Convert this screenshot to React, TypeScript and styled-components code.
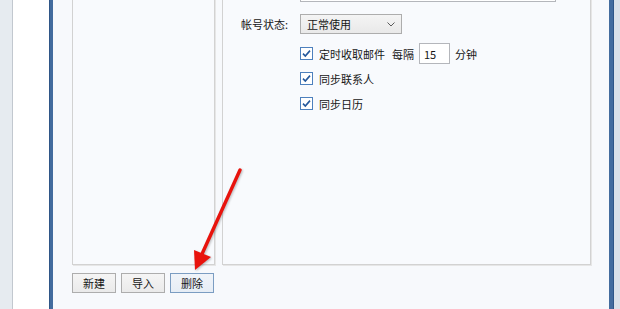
import React from "react";
import styled, { createGlobalStyle } from "styled-components";

const GlobalStyle = createGlobalStyle`
  html, body {
    margin: 0;
    padding: 0;
  }
  body {
    background: #e6ebf0;
    font-family: "Noto Sans CJK SC", "Noto Sans", sans-serif;
    font-size: 11px;
    color: #161616;
    overflow: hidden;
  }
`;

const Page = styled.div`
  position: relative;
  display: flex;
  width: 620px;
  height: 309px;
  overflow: hidden;
`;

const DesktopStrip = styled.div`
  width: 12px;
  background: #e6ebf0;
  border-right: 1px solid #c2c8cf;
`;

const SideWhite = styled.div`
  width: 36px;
  background: #ffffff;
`;

const WindowEdge = styled.div<{ $side: "left" | "right" }>`
  width: ${(p) => (p.$side === "left" ? "4px" : "5px")};
  background: #436c9e;
  box-shadow: ${(p) =>
    p.$side === "left"
      ? "inset 1px 0 0 #2f5687"
      : "inset -1px 0 0 #2f5687"};
`;

const RightStrip = styled.div`
  flex: 1;
  background: #dae1e9;
`;

const WindowBody = styled.div`
  width: 556px;
  box-sizing: border-box;
  padding: 0 18px 0 19px;
  background: #f7f9fc;
  display: flex;
  flex-direction: column;
`;

const Panels = styled.div`
  display: flex;
  gap: 7px;
  margin-top: -30px;
  height: 295px;
`;

const Panel = styled.div`
  box-sizing: border-box;
  border: 1px solid #d2d2d2;
  box-shadow: 1px 1px 0 #e6e6e6;
  background: #f8fafd;
`;

const ListPanel = styled(Panel)`
  width: 143px;
`;

const SettingsPanel = styled(Panel)`
  flex: 1;
  display: flex;
  flex-direction: column;
  padding: 11px 0 0 10px;
`;

const FieldRow = styled.div<{ $gap: number; $height: number }>`
  display: flex;
  align-items: center;
  gap: 12px;
  height: ${(p) => p.$height}px;
  margin-top: ${(p) => p.$gap}px;
`;

const Label = styled.span`
  width: 55px;
  text-align: right;
  white-space: nowrap;
`;

const TextInput = styled.div<{ $width: number; $height: number }>`
  box-sizing: border-box;
  width: ${(p) => p.$width}px;
  height: ${(p) => p.$height}px;
  border: 1px solid #b4b6bb;
  background: #ffffff;
  display: flex;
  align-items: center;
  padding-left: 4px;
`;

const Select = styled.div`
  box-sizing: border-box;
  width: 102px;
  height: 20px;
  border: 1px solid #adadad;
  background: linear-gradient(#f4f4f4, #e9e9e9);
  display: flex;
  align-items: center;
  justify-content: space-between;
  padding: 0 6px 0 6px;
`;

const CheckLine = styled.div`
  display: flex;
  align-items: center;
`;

const Box = styled.span`
  box-sizing: border-box;
  width: 13px;
  height: 13px;
  border: 1px solid #4d80bd;
  background: #ffffff;
  display: flex;
  align-items: center;
  justify-content: center;
  margin-right: 6px;
`;

const Inline = styled.span<{ $left?: number }>`
  margin-left: ${(p) => p.$left ?? 0}px;
  white-space: nowrap;
`;

const ButtonRow = styled.div`
  display: flex;
  gap: 5px;
  margin-top: 8px;
`;

const Button = styled.div<{ $focused?: boolean }>`
  box-sizing: border-box;
  width: 44px;
  height: 20px;
  border: 1px solid ${(p) => (p.$focused ? "#7b9dc2" : "#adadad")};
  background: ${(p) =>
    p.$focused
      ? "linear-gradient(#f0f4f9, #e6edf5)"
      : "linear-gradient(#f5f5f5, #eaeaea)"};
  display: flex;
  align-items: center;
  justify-content: center;
`;

const ArrowLayer = styled.svg`
  position: absolute;
  left: 0;
  top: 0;
  width: 620px;
  height: 309px;
  pointer-events: none;
  filter: drop-shadow(1px 1px 1px rgba(0, 0, 0, 0.25));
`;

const Checkbox: React.FC<{ children: React.ReactNode }> = ({ children }) => (
  <CheckLine>
    <Box>
      <svg width="11" height="11" viewBox="0 0 11 11">
        <path
          d="M2 5.6 L4.3 8 L9 2.6"
          fill="none"
          stroke="#24589c"
          strokeWidth="1.6"
        />
      </svg>
    </Box>
    {children}
  </CheckLine>
);

const Chevron = () => (
  <svg width="8" height="5" viewBox="0 0 8 5">
    <path d="M0.5 0.5 L4 4 L7.5 0.5" fill="none" stroke="#5a5a5a" strokeWidth="1" />
  </svg>
);

export default function App() {
  return (
    <>
      <GlobalStyle />
      <Page>
        <DesktopStrip />
        <SideWhite />
        <WindowEdge $side="left" />
        <WindowBody>
          <Panels>
            <ListPanel />
            <SettingsPanel>
              {/* top field: only its lower edge shows in the shot */}
              <FieldRow $gap={0} $height={20}>
                <Label />
                <TextInput $width={256} $height={20} />
              </FieldRow>
              <FieldRow $gap={12} $height={20}>
                <Label>帐号状态:</Label>
                <Select>
                  <span>正常使用</span>
                  <Chevron />
                </Select>
              </FieldRow>
              <FieldRow $gap={7} $height={25}>
                <Label />
                <Checkbox>
                  <Inline>定时收取邮件</Inline>
                  <Inline $left={7}>每隔</Inline>
                  <Inline $left={5}>
                    <TextInput $width={31} $height={21}>15</TextInput>
                  </Inline>
                  <Inline $left={5}>分钟</Inline>
                </Checkbox>
              </FieldRow>
              <FieldRow $gap={0} $height={25}>
                <Label />
                <Checkbox>同步联系人</Checkbox>
              </FieldRow>
              <FieldRow $gap={0} $height={25}>
                <Label />
                <Checkbox>同步日历</Checkbox>
              </FieldRow>
            </SettingsPanel>
          </Panels>
          <ButtonRow>
            <Button>新建</Button>
            <Button>导入</Button>
            <Button $focused>删除</Button>
          </ButtonRow>
        </WindowBody>
        <WindowEdge $side="right" />
        <RightStrip />
        <ArrowLayer viewBox="0 0 620 309">
          <line
            x1="240"
            y1="170"
            x2="202"
            y2="254"
            stroke="#e8130d"
            strokeWidth="3.4"
            strokeLinecap="round"
          />
          <polygon points="195,270 194,250 211,257" fill="#e8130d" />
        </ArrowLayer>
      </Page>
    </>
  );
}
